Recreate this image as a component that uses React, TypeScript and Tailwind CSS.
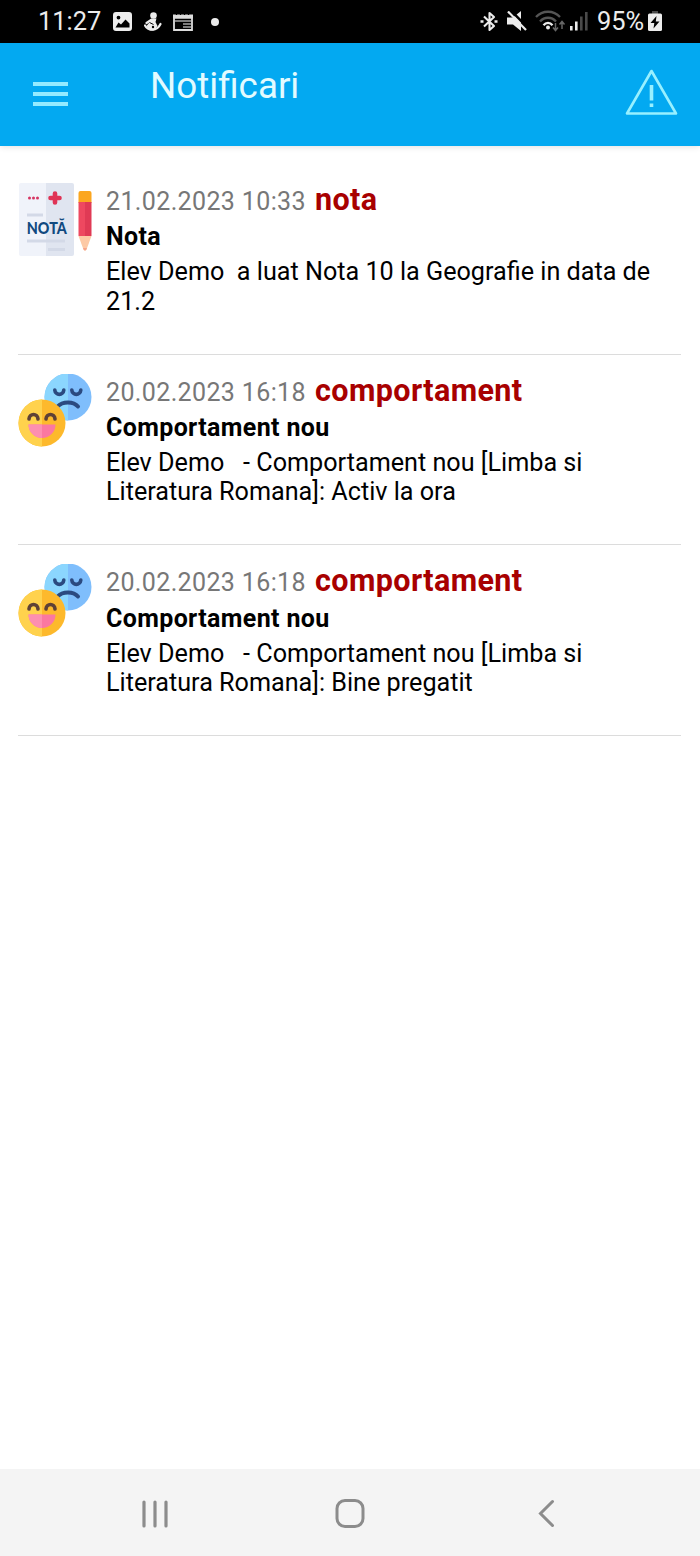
import type { ReactNode } from 'react'

type Notification = {
  id: number
  date: string
  tag: string
  title: string
  text: string
  icon: 'grade' | 'behaviour'
}

const notifications: Notification[] = [
  {
    id: 1,
    date: '21.02.2023 10:33',
    tag: 'nota',
    title: 'Nota',
    text: 'Elev Demo  a luat Nota 10 la Geografie in data de 21.2',
    icon: 'grade',
  },
  {
    id: 2,
    date: '20.02.2023 16:18',
    tag: 'comportament',
    title: 'Comportament nou',
    text: 'Elev Demo   - Comportament nou [Limba si Literatura Romana]: Activ la ora',
    icon: 'behaviour',
  },
  {
    id: 3,
    date: '20.02.2023 16:18',
    tag: 'comportament',
    title: 'Comportament nou',
    text: 'Elev Demo   - Comportament nou [Limba si Literatura Romana]: Bine pregatit',
    icon: 'behaviour',
  },
]

function GradeIcon() {
  return (
    <svg width="74" height="74" viewBox="0 0 74 74">
      <path d="M3 0h25v73H3a2 2 0 0 1-2-2V2a2 2 0 0 1 2-2z" fill="#f0f3fa" />
      <path d="M28 0h26a2 2 0 0 1 2 2v69a2 2 0 0 1-2 2H28z" fill="#e0e5f0" />
      <g fill="#d63562">
        <circle cx="11.500" cy="15" r="1.500" />
        <circle cx="15.500" cy="15" r="1.500" />
        <circle cx="19.500" cy="15" r="1.500" />
      </g>
      <path d="M37 10.500v9M32.500 15h9" stroke="#e03355" strokeWidth="4.600" strokeLinecap="round" />
      <path d="M9 32h16M9 58h38M30 66.500h17" stroke="#d3d9e7" strokeWidth="3" />
      <text x="8.800" y="51" textLength="40" lengthAdjust="spacingAndGlyphs" fill="#114a80" className="font-['Lato',sans-serif] text-[16.500px] font-black">
        NOTĂ
      </text>
      <path d="M60.500 20V10a2 2 0 0 1 2-2h9a2 2 0 0 1 2 2v10z" fill="#fba61f" />
      <path d="M60.500 19h6.500v34h-6.500z" fill="#ee4860" />
      <path d="M67 19h6.500v34H67z" fill="#e03a55" />
      <path d="M60.500 53h13l-5 13.500a1.600 1.600 0 0 1-3 0z" fill="#fdc9a5" />
      <path d="M65 65h4l-.6 1.500a1.500 1.500 0 0 1-2.800 0z" fill="#f6a58b" />
    </svg>
  )
}

function BehaviourIcon() {
  return (
    <svg width="74" height="74" viewBox="0 0.5 74 74" fill="none">
      <circle cx="50" cy="23.500" r="23.500" fill="#7fbefc" />
      <path d="M50 0a23.500 23.500 0 0 0 0 47z" fill="#8bd6fe" />
      <g stroke="#2b4a80" strokeWidth="3.600" strokeLinecap="round">
        <path d="M36.800 16.500c.5 5.800 8.500 5.800 9 0M53.800 16.500c.5 5.800 8.500 5.800 9 0" />
        <path d="M39.500 33c5-5.500 16-5.500 20.500 0" strokeWidth="4" />
      </g>
      <circle cx="24" cy="49.500" r="23.500" fill="#fdb92c" />
      <path d="M24 26a23.500 23.500 0 0 0 0 47z" fill="#ffd24d" />
      <path d="M11 45.500c.5-6 8.500-6 9 0M28 45.500c.5-6 8.500-6 9 0" stroke="#5f4136" strokeWidth="3.600" strokeLinecap="round" />
      <path d="M10.500 51h27a13.500 13.500 0 0 1-27 0z" fill="#fb78a0" />
      <path d="M10.500 51H24v13.500A13.500 13.500 0 0 1 10.500 51z" fill="#fd8fb0" />
    </svg>
  )
}

function StatusBar() {
  return (
    <div className="flex h-[43px] shrink-0 items-center bg-black pl-[38px] pr-[38px] text-[25.400px] text-[#ececec]">
      <span className="w-[75px] whitespace-nowrap">11:27</span>
      <svg width="19" height="19" viewBox="0 0 19 19">
        <path fillRule="evenodd" fill="#ececec" d="M3 0h13a3 3 0 0 1 3 3v13a3 3 0 0 1-3 3H3a3 3 0 0 1-3-3V3a3 3 0 0 1 3-3zM2.500 15.500h14v-4l-4-4-4.500 5-2.500-2zM5.500 3.700a1.900 1.900 0 1 0 0 3.800 1.900 1.900 0 0 0 0-3.800z" />
      </svg>
      <svg className="ml-[12px]" width="18" height="19" viewBox="0 0 18 19" fill="none">
        <circle cx="9.500" cy="3.500" r="3.300" fill="#ececec" />
        <path d="M7 6.500h5.500L11.500 10l2 4-3.500 4.500H6L2.500 14l2.500-3z" fill="#ececec" />
        <path d="M7 8l-4.500 3M1 13.500c3 5.500 12 6 15.500-1.500" stroke="#ececec" strokeWidth="2.200" strokeLinecap="round" />
        <path d="M5.500 10.500l4 2" stroke="#000" strokeWidth="1" />
        <circle cx="9" cy="15" r="1.200" fill="#000" />
      </svg>
      <svg className="ml-[11px]" width="20" height="18" viewBox="0 0 20 18" fill="none" stroke="#dcdcdc">
        <path d="M1 4.500h18V17H1z" strokeWidth="1.800" />
        <path d="M0 3.500h20" strokeWidth="4" />
        <path d="M3.500 0v2M7.500 0v2M11.500 0v2M15.500 0v2" stroke="#000" strokeWidth="1.200" />
        <path d="M2 8h16M10 11h8M10 14h8" strokeWidth="1.500" stroke="#a5a5a5" />
        <path d="M3 10.500h6V16H3z" fill="#000" stroke="none" />
      </svg>
      <span className="ml-[18px] size-[8px] rounded-full bg-[#ececec]" />

      <div className="ml-auto flex items-center">
        <svg width="18" height="21" viewBox="0 0 18 21" fill="none" stroke="#ececec" strokeWidth="2.100">
          <path d="M4 5.500l10 9.500-4.500 4V2L14 6 4 15.500" strokeLinejoin="round" />
          <path d="M.5 10.500h3M14.500 10.500h3" strokeWidth="2.600" />
        </svg>
        <svg className="ml-[9px]" width="20" height="20" viewBox="0 0 20 20">
          <path d="M0 6.500h6L14 0v20l-8-6.500H0z" fill="#ececec" />
          <path d="M3-1.500l18 18.500" stroke="#000" strokeWidth="2.500" />
          <path d="M1 .5l18 18.500" stroke="#ececec" strokeWidth="2.200" />
        </svg>
        <svg className="ml-[8px]" width="31" height="22" viewBox="0 0 31 22" fill="none">
          <path d="M1 7c6.500-7 17.500-7 24 0M5 11.500c4.500-5 11.500-5 16 0" stroke="#555" strokeWidth="2.300" />
          <path d="M8.500 15.200c2.500-3 6.500-3 9 0" stroke="#ececec" strokeWidth="2.300" />
          <circle cx="13" cy="17.500" r="2" fill="#ececec" />
          <path d="M20.500 13v7M18 17.500l2.500 3 2.500-3M27 19v-7M24.500 14.500l2.500-3 2.500 3" stroke="#666" strokeWidth="1.500" />
        </svg>
        <svg className="ml-[4px]" width="18" height="20" viewBox="0 0 18 20">
          <path d="M0 15h2.600v4.500H0zM5 10.500h2.600v9H5z" fill="#ececec" />
          <path d="M10 5.500h2.600v14H10zM15 1h2.600v18.500H15z" fill="#4a4a4a" />
        </svg>
        <span className="ml-[9px] w-[50px] whitespace-nowrap">95%</span>
        <svg className="ml-[1px]" width="14" height="20" viewBox="0 0 14 20">
          <path d="M4 0h6v3H4z" fill="#4a4a4a" />
          <rect y="2.500" width="14" height="17.500" rx="1.500" fill="#ececec" />
          <path d="M8.500 5L2.500 12h3.800L5.500 17.500l6-7H7.800z" fill="#000" />
        </svg>
      </div>
    </div>
  )
}

function Header() {
  return (
    <header className="flex h-[103px] shrink-0 bg-[#03a9f1] pl-[33px] pr-[22px] shadow-[0_1px_6px_rgba(0,0,0,0.12)]">
      <button className="mt-[39px] flex h-[24px] w-[35px] flex-col justify-between" aria-label="Meniu">
        <span className="h-[4px] w-full bg-[#94ebff]" />
        <span className="h-[4px] w-full bg-[#94ebff]" />
        <span className="h-[4px] w-full bg-[#94ebff]" />
      </button>
      <h1 className="ml-[82px] mt-[21px] text-[36.800px] leading-[44px] text-[#e2fbff]">Notificari</h1>
      <svg className="ml-auto mt-[25px]" width="53" height="48" viewBox="0 0 53 48" fill="none" stroke="#98f0ff">
        <path d="M26.500 3L51 45.500H2z" strokeWidth="2.600" strokeLinejoin="round" />
        <path d="M26.500 17v15.500M26.500 35.500v3.500" strokeWidth="3.600" />
      </svg>
    </header>
  )
}

function NotificationRow({ item }: { item: Notification }) {
  return (
    <li className="flex h-[190.600px] border-b border-[#dcdcdc] pt-[18px]">
      <div className="w-[88px] shrink-0 pt-px">
        {item.icon === 'grade' ? <GradeIcon /> : <BehaviourIcon />}
      </div>
      <div className="min-w-0 flex-1">
        <div className="flex h-[38.200px] items-baseline leading-[36px]">
          <span className="w-[209px] whitespace-nowrap text-[25px] tracking-[0.370px] text-[#777]">{item.date}</span>
          <span className="text-[30.500px] font-bold tracking-[0.400px] text-[#a80000]">{item.tag}</span>
        </div>
        <h2 className="text-[25px] font-bold leading-[34px] tracking-[0.360px]">{item.title}</h2>
        <p className="mt-[3px] whitespace-pre-wrap text-[25.180px] leading-[29.300px]">{item.text}</p>
      </div>
    </li>
  )
}

function NavButton({ label, children }: { label: string; children: ReactNode }) {
  return (
    <button aria-label={label} className="flex w-[196px] items-center justify-center">
      <svg width="32" height="32" viewBox="0 0 32 32" fill="none" stroke="#8c8c8c" strokeLinecap="round">
        {children}
      </svg>
    </button>
  )
}

function App() {
  return (
    <div className="flex h-[1556px] w-[700px] flex-col overflow-hidden bg-white font-[Roboto,sans-serif] text-black">
      <StatusBar />
      <Header />
      <ul className="flex-1 pl-[18px] pr-[19px] pt-[18.300px]">
        {notifications.map((item) => (
          <NotificationRow key={item.id} item={item} />
        ))}
      </ul>
      <nav className="flex h-[87px] shrink-0 justify-center bg-[#f4f4f4] pt-[2px]">
        <NavButton label="Recente">
          <path d="M6 4v24M17 4v24M28 4v24" strokeWidth="3.200" />
        </NavButton>
        <NavButton label="Acasa">
          <rect x="3" y="2.500" width="26" height="26" rx="8" strokeWidth="3" />
        </NavButton>
        <NavButton label="Inapoi">
          <path d="M22.500 3.500L10.500 15.500l12 12" strokeWidth="3" />
        </NavButton>
      </nav>
    </div>
  )
}

export default App
